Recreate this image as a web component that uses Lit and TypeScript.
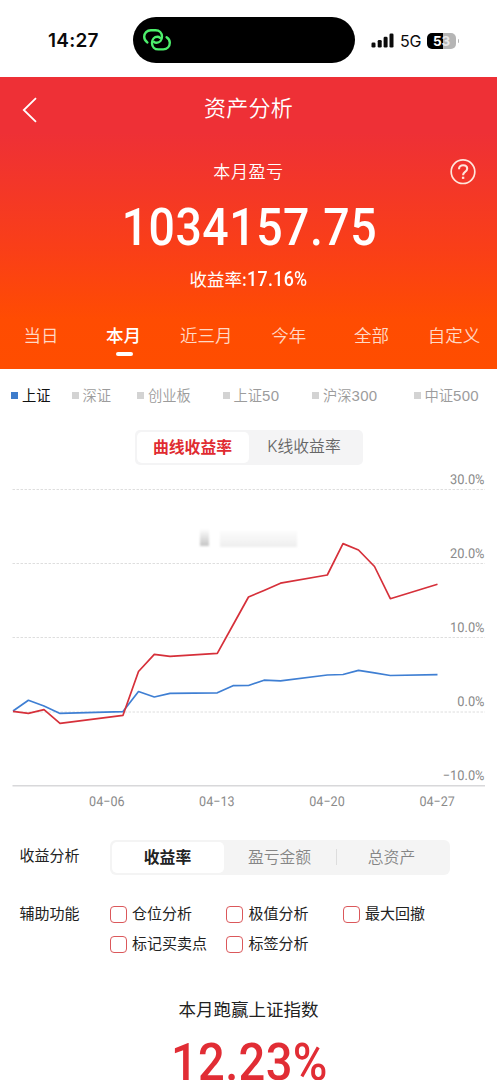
import { LitElement, html, svg, css } from "lit";
import { customElement, state } from "lit/decorators.js";
import { classMap } from "lit/directives/class-map.js";

const CJK = css`"Noto Sans CJK SC", "Noto Sans", sans-serif`;
const NUM = css`Roboto, "Noto Sans CJK SC", sans-serif`;

@customElement("status-bar")
class StatusBar extends LitElement {
  static styles = css`
    :host { display: grid; grid-template-columns: 133px 222px 1fr; height: 77px; box-sizing: border-box; padding-top: 17px; font-family: Inter, sans-serif; color: #0b0b0b; }
    .time { height: 47px; line-height: 48px; padding-left: 48px; font-size: 19px; font-weight: 600; letter-spacing: 0.25px; }
    .island { height: 46px; border-radius: 23px; background: #000; }
    .island svg { display: block; }
    .right { display: flex; height: 47px; padding-left: 16px; align-items: center; }
    .right svg { display: block; }
    .net { font-size: 16px; width: 22px; margin: 1px 5px 0 6px; letter-spacing: -0.3px; }
    .battery { display: flex; width: 29px; height: 16px; border-radius: 5px; background: linear-gradient(90deg, #000 54%, #b5b5b5 54%); color: #fff; font-size: 13.5px; font-weight: 700; line-height: 17px; justify-content: center; letter-spacing: -0.2px; }
    .low { color: #e9e9e9; }
    .cap { width: 1.5px; height: 4px; margin-left: 1.5px; background: #b5b5b5; border-radius: 0 2px 2px 0; }
  `;
  render() {
    return html`
      <div class="time">14:27</div>
      <div class="island">
        <svg width="48" height="46" viewBox="0 0 48 46" fill="none" stroke="#4df06c" stroke-width="2.4" stroke-linecap="round">
          <path d="M14.4 25.4C12.2 24 11.2 22 11.2 19.8C11.2 16 14 13.2 17.8 13.2H22.6C26.4 13.2 29 16 29 19.6C29 23.2 26.6 25.8 23.6 25.8C22.4 25.8 21.6 25.4 21 24.8"/>
          <path d="M33.6 20.2C35.8 21.6 36.8 23.6 36.8 25.8C36.8 29.6 34 32.4 30.2 32.4H25.4C21.6 32.4 19 29.6 19 26C19 22.4 21.4 19.8 24.4 19.8C25.6 19.8 26.4 20.2 27 20.8"/>
        </svg>
      </div>
      <div class="right">
        <svg width="23" height="15" viewBox="0 0 23 15" fill="#0b0b0b">
          <rect x="0.5" y="9.5" width="4" height="5" rx="1.3"/><rect x="6.7" y="7" width="4" height="7.5" rx="1.3"/>
          <rect x="12.6" y="3.8" width="4" height="10.7" rx="1.3"/><rect x="18.5" y="0.5" width="4" height="14" rx="1.3"/>
        </svg>
        <div class="net">5G</div>
        <div class="battery"><span>5</span><span class="low">3</span></div>
        <div class="cap"></div>
      </div>`;
  }
}

@customElement("profit-hero")
class ProfitHero extends LitElement {
  @state() private active = 1;
  static styles = css`
    :host { display: flex; flex-direction: column; height: 291.5px; color: #fff; background: linear-gradient(180deg, #ee3036 0%, #ee3036 19%, #fa3f17 60%, #ff4c02 83%, #ff4d00 100%); font-family: ${CJK}; }
    .nav { display: grid; grid-template-columns: 60px 1fr 60px; height: 65px; }
    .nav svg { margin: 20px 0 0 22px; }
    .title { text-align: center; font-size: 22px; line-height: 58px; letter-spacing: 0.3px; font-weight: 350; }
    .sub { display: grid; grid-template-columns: 60px 1fr 60px; height: 60px; }
    .label { text-align: center; font-size: 17px; line-height: 57px; letter-spacing: 0.6px; font-weight: 350; }
    .sub svg { margin: 16px 0 0 12px; }
    .amount { height: 54px; line-height: 52px; text-align: center; font-family: ${NUM}; font-weight: 500; font-size: 52px; letter-spacing: 0.55px; padding-left: 2px; transform: scaleX(0.893); }
    .rate { height: 46px; line-height: 46px; text-align: center; font-size: 17.5px; }
    .rate b { display: inline-block; font-family: ${NUM}; font-weight: 500; font-size: 19.5px; letter-spacing: 0.4px; transform: scaleX(0.91); margin: 0 -3px; }
    .tabs { display: grid; grid-template-columns: repeat(6, 82.6px); justify-content: center; height: 66px; }
    .tab { display: flex; flex-direction: column; align-items: center; font-size: 17.5px; line-height: 26px; padding: 20px 2px 0 0; color: #ffd9c6; font-weight: 350; white-space: nowrap; }
    .on { color: #fff; font-weight: 500; }
    .bar { width: 17px; height: 4px; border-radius: 2px; background: #fff; margin-top: 4px; margin-left: 2px; }
  `;
  render() {
    return html`
      <div class="nav">
        <svg width="16" height="26" viewBox="0 0 16 26" fill="none" stroke="#fff" stroke-width="1.8"><path d="M14 1.2L1.8 13L14 24.8"/></svg>
        <div class="title">资产分析</div>
      </div>
      <div class="sub">
        <span></span>
        <div class="label">本月盈亏</div>
        <svg width="28" height="28" viewBox="0 0 28 28" fill="none" stroke="#ffe6dc" stroke-width="1.7">
          <circle cx="14" cy="13.7" r="11.8"/>
          <path d="M10 11.2C10 8.7 11.7 7.3 14.1 7.3C16.5 7.3 18.2 8.7 18.2 10.8C18.2 12.4 17.2 13.2 15.8 14.1C14.6 14.9 14.1 15.5 14.1 17.3" stroke-width="2.1"/>
          <path d="M14.1 18.7V20.9" stroke-width="2.4"/>
        </svg>
      </div>
      <div class="amount">1034157.75</div>
      <div class="rate">收益率:<b>17.16%</b></div>
      <div class="tabs">
        ${["当日", "本月", "近三月", "今年", "全部", "自定义"].map((t, i) => html`
          <div class=${classMap({ tab: true, on: i === this.active })} @click=${() => (this.active = i)}>
            ${t}${i === this.active ? html`<span class="bar"></span>` : ""}
          </div>`)}
      </div>`;
  }
}

const X = [13, 28.4, 44, 60, 123, 138.5, 154.3, 170, 217.3, 233, 248.5, 264, 280.5, 327.3, 343, 358.5, 374.5, 390.3, 437.5];
const MINE = [711.3, 713.3, 709.7, 723.3, 715.3, 671.5, 654.3, 656.4, 653.4, 625, 597, 590.5, 583.2, 575, 543.6, 550, 566.5, 598.7, 584.2];
const INDEX = [711, 700.3, 706, 713.4, 711.6, 691.5, 697, 693.3, 692.8, 685.7, 685.5, 680.2, 680.9, 675, 674.5, 670.4, 672.8, 675.5, 674.7];
const line = (ys: number[]) => ys.map((y, i) => `${X[i]},${y - 470}`).join(" ");

@customElement("yield-chart")
class YieldChart extends LitElement {
  static styles = css`
    :host { display: block; height: 350px; }
    svg { display: block; }
    text { font-family: ${NUM}; font-size: 13.5px; fill: #8a8a8a; text-rendering: geometricPrecision; }
    .grid { stroke: #dedede; stroke-width: 1; stroke-dasharray: 2.5 1.5; }
    .axis { stroke: #d8d8da; stroke-width: 1.5; }
    .mine, .index { fill: none; stroke-width: 1.7; stroke-linejoin: round; }
    .mine { stroke: #d6303a; }
    .index { stroke: #3f7fd3; }
  `;
  render() {
    return html`<svg width="497" height="350" viewBox="0 0 497 350">
      <defs>
        <linearGradient id="fade" x1="0" y1="0" x2="0" y2="1"><stop offset="0" stop-color="#fcfcfc"/><stop offset="1" stop-color="#eeeeee"/></linearGradient>
        <linearGradient id="dark" x1="0" y1="0" x2="0" y2="1"><stop offset="0" stop-color="#fff"/><stop offset="1" stop-color="#c4c4c4"/></linearGradient>
        <filter id="soft"><feGaussianBlur stdDeviation="1"/></filter>
      </defs>
      ${[19.5, 93.5, 167.5, 242].map((y) => svg`<line class="grid" x1="12.5" x2="485" y1=${y} y2=${y}/>`)}
      <line class="axis" x1="12.5" x2="485" y1="315.8" y2="315.8"/>
      <g filter="url(#soft)">
        <rect x="200" y="59" width="9" height="17" fill="url(#dark)"/>
        <rect x="220" y="61" width="77" height="16" fill="url(#fade)"/>
      </g>
      <polyline class="index" points=${line(INDEX)}/>
      <polyline class="mine" points=${line(MINE)}/>
      ${[["30.0%", 13.7], ["20.0%", 87.7], ["10.0%", 161.7], ["0.0%", 236], ["−10.0%", 310.2]].map(([t, y]) => svg`<text transform="translate(484.5 ${y}) scale(0.95 1)" text-anchor="end">${t}</text>`)}
      ${[["04−06", 106.8], ["04−13", 216.8], ["04−20", 327], ["04−27", 437.2]].map(([t, x]) => svg`<text transform="translate(${x} 335.6) scale(0.93 1)" text-anchor="middle">${t}</text>`)}
    </svg>`;
  }
}

@customElement("app-root")
class AppRoot extends LitElement {
  static styles = css`
    :host { display: block; height: 1080px; overflow: hidden; background: #fff; font-family: ${CJK}; color: #222; }
    .legend { display: flex; height: 54px; padding-left: 11px; font-family: "Liberation Sans", ${CJK}; font-size: 14.3px; line-height: 54px; color: #9c9c9c; font-weight: 350; white-space: nowrap; }
    .item { display: flex; align-items: center; gap: 4px; box-sizing: border-box; }
    .item i { width: 7px; height: 7px; background: #d3d3d3; }
    .item span { font-size: 15px; letter-spacing: 0.2px; }
    .item.on { color: #111; font-weight: 400; }
    .item.on i { background: #3e7ccb; }
    .w0 { width: 60.5px; } .w1 { width: 65.5px; } .w2 { width: 85.5px; } .w3 { width: 89.5px; } .w4 { width: 101.5px; }
    .mode { display: grid; grid-template-columns: 112px 111px; width: 228px; height: 35px; box-sizing: border-box; padding: 2px; margin: 7px 0 5.5px 134.5px; border-radius: 5px; background: #f4f4f5; text-align: center; font-size: 15.8px; line-height: 29px; color: #666; }
    .mode .sel { background: #fff; border-radius: 5px; color: #e02b30; font-weight: 700; }
    .plain { font-family: Inter, ${CJK}; font-weight: 350; line-height: 30px; }
    .row { display: grid; grid-template-columns: 90px 1fr; padding-left: 19.5px; font-size: 15px; }
    .kind { display: grid; grid-template-columns: 112px 112px 112px; height: 35px; width: 340px; box-sizing: border-box; padding: 2px; border-radius: 6px; background: #f4f4f4; text-align: center; font-size: 15.8px; line-height: 29px; color: #858585; font-weight: 350; }
    .kind .sel { background: #fff; border-radius: 5px; color: #222; font-weight: 700; }
    .kind .last { background: linear-gradient(#ddd, #ddd) 0 7px / 1px 16px no-repeat; }
    .first { margin-top: 20px; line-height: 29px; }
    .second { margin-top: 22.5px; line-height: 30px; }
    .checks { display: grid; grid-template-columns: 116.5px 116.5px auto; justify-content: start; grid-auto-rows: 30.5px; }
    .check { display: flex; align-items: center; gap: 5.5px; white-space: nowrap; }
    .check i { width: 17px; height: 17px; box-sizing: border-box; border: 1px solid #db585b; border-radius: 4px; margin-top: 3px; }
    .beat { text-align: center; font-size: 17.5px; line-height: 28px; margin-top: 36.5px; }
    .pct { text-align: center; font-family: ${NUM}; font-weight: 500; font-size: 52px; line-height: 56px; color: #e12d35; letter-spacing: 0.4px; margin-top: 12px; padding-left: 2px; transform: scaleX(0.905); }
  `;
  render() {
    return html`
      <status-bar></status-bar>
      <profit-hero></profit-hero>
      <div class="legend">
        ${[["上证", ""], ["深证", ""], ["创业板", ""], ["上证", "50"], ["沪深", "300"], ["中证", "500"]].map(([t, n], i) => html`<div class="item w${i} ${i ? "" : "on"}"><i></i><div>${t}${n ? html`<span>${n}</span>` : ""}</div></div>`)}
      </div>
      <div class="mode"><div class="sel">曲线收益率</div><div class="plain">K线收益率</div></div>
      <yield-chart></yield-chart>
      <div class="row first">
        <div>收益分析</div>
        <div class="kind"><div class="sel">收益率</div><div>盈亏金额</div><div class="last">总资产</div></div>
      </div>
      <div class="row second">
        <div>辅助功能</div>
        <div class="checks">
          ${["仓位分析", "极值分析", "最大回撤", "标记买卖点", "标签分析"].map((t) => html`<div class="check"><i></i>${t}</div>`)}
        </div>
      </div>
      <div class="beat">本月跑赢上证指数</div>
      <div class="pct">12.23%</div>`;
  }
}
